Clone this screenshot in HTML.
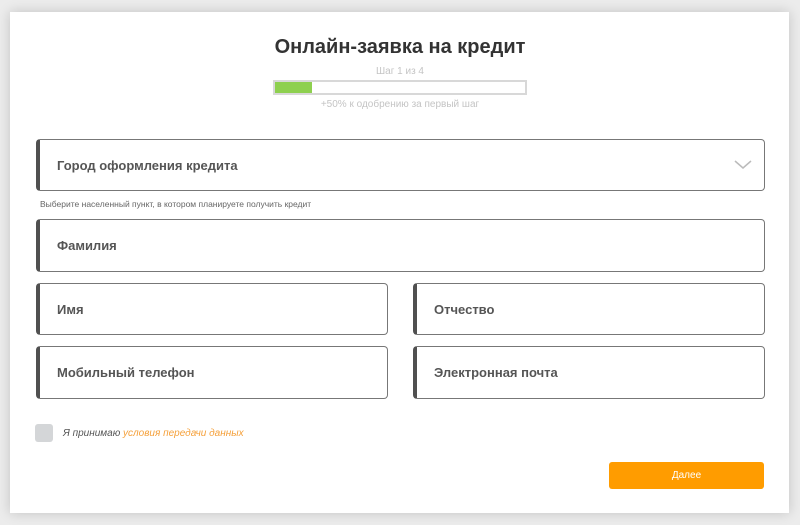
<!DOCTYPE html>
<html><head><meta charset="utf-8"><style>
body{margin:0;width:800px;height:525px;background:#ececec;font-family:"Liberation Sans","DejaVu Sans",sans-serif;position:relative;overflow:hidden}
.card{position:absolute;left:10px;top:12px;width:779px;height:501px;background:#fff;box-shadow:0 0 12px rgba(0,0,0,.18)}
.f{position:absolute;box-sizing:border-box;border:1px solid #777;border-left:4px solid #505050;border-radius:4px;font-size:13px;font-weight:bold;color:#555;padding-left:17px;display:flex;align-items:center}
.t{position:absolute;text-align:center;width:800px;left:0}
</style></head><body>
<div class="card"></div>
<div class="t" style="top:36px;font-size:20px;font-weight:bold;color:#333">Онлайн-заявка на кредит</div>
<div class="t" style="top:66px;font-size:10px;color:#c4c4c4">Шаг 1 из 4</div>
<div style="position:absolute;left:273px;top:80px;width:254px;height:15px;box-sizing:border-box;border:2px solid #d8d8d8"><div style="width:37px;height:11px;background:#8ed04f"></div></div>
<div class="t" style="top:99px;font-size:10px;color:#c4c4c4">+50% к одобрению за первый шаг</div>
<div class="f" style="left:36px;top:139px;width:729px;height:52px">Город оформления кредита
<svg style="position:absolute;right:12px;top:20px" width="18" height="10"><path d="M1 1L9 8L17 1" fill="none" stroke="#bbb" stroke-width="1.5"/></svg></div>
<div style="position:absolute;left:40px;top:199px;font-size:8.5px;color:#666">Выберите населенный пункт, в котором планируете получить кредит</div>
<div class="f" style="left:36px;top:219px;width:729px;height:53px">Фамилия</div>
<div class="f" style="left:36px;top:283px;width:352px;height:52px">Имя</div>
<div class="f" style="left:413px;top:283px;width:352px;height:52px">Отчество</div>
<div class="f" style="left:36px;top:346px;width:352px;height:53px">Мобильный телефон</div>
<div class="f" style="left:413px;top:346px;width:352px;height:53px">Электронная почта</div>
<div style="position:absolute;left:35px;top:424px;width:18px;height:18px;background:#d4d6d8;border-radius:3px"></div>
<div style="position:absolute;left:63px;top:428px;font-size:10px;font-style:italic;color:#555">Я принимаю <span style="color:#f5a03a">условия передачи данных</span></div>
<div style="position:absolute;left:609px;top:462px;width:155px;height:27px;background:#ff9c00;border-radius:3px;color:#fff;font-size:10px;display:flex;align-items:center;justify-content:center">Далее</div>
</body></html>
